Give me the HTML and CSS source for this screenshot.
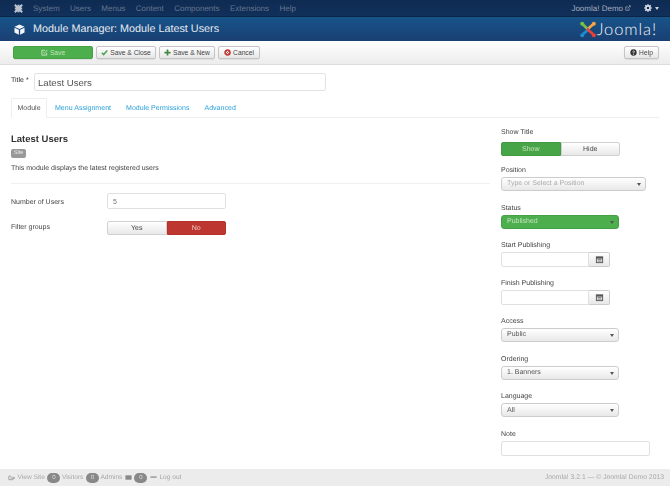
FILE: index.html
```html
<!DOCTYPE html>
<html lang="en">
<head>
    <meta charset="UTF-8">
    <title>Module Manager: Module Latest Users</title>
    <link rel="stylesheet" href="styles.css">
</head>
<body>
    <nav class="topnav">
        <svg class="brand-icon" viewBox="0 0 12 12"><path d="M2 2 L10 10 M10 2 L2 10 M2 6 H4 M10 6 H8 M6 2 V4 M6 10 V8" stroke="#bcc3ce" stroke-width="2.2" fill="none"/></svg>
        <ul class="menu">
            <li>System</li>
            <li>Users</li>
            <li>Menus</li>
            <li>Content</li>
            <li>Components</li>
            <li>Extensions</li>
            <li>Help</li>
        </ul>
        <div class="nav-right">
            <span>Joomla! Demo</span>
            <svg class="ext-icon" viewBox="0 0 8 8"><path d="M5.5 4.5 V7 H1 V2.5 H3.5 M3.5 4.5 L7 1 M5 1 H7 V3" stroke="#9aa7ba" fill="none"/></svg>
            <svg class="gear" viewBox="0 0 10 10"><circle cx="5" cy="5" r="2.6" fill="none" stroke="#dfe3ea" stroke-width="2"/><path d="M5 0 V10 M0 5 H10 M1.5 1.5 L8.5 8.5 M8.5 1.5 L1.5 8.5" stroke="#dfe3ea" stroke-width="1.3" stroke-dasharray="1.6 6.8"/></svg>
            <span class="caret caret-light"></span>
        </div>
    </nav>

    <header class="subhead">
        <svg class="cube" viewBox="0 0 12 12"><path d="M6 0.5 L11.5 3 L6 5.4 L0.5 3 Z M0.5 4.2 L5.3 6.4 V11.8 L0.5 9.4 Z M11.5 4.2 L6.7 6.4 V11.8 L11.5 9.4 Z" fill="#f2f4f7"/></svg>
        <h1>Module Manager: Module Latest Users</h1>
        <div class="logo">
            <svg class="logo-mark" viewBox="0 0 16 17">
                <path d="M3 3.5 L6 6.5 L9 9.5" stroke="#7ac143" stroke-width="2.6" fill="none"/>
                <circle cx="2.2" cy="2.8" r="2" fill="#7ac143"/>
                <path d="M13 3.5 L10 6 L7 9" stroke="#f9a541" stroke-width="2.6" fill="none"/>
                <circle cx="13.8" cy="2.8" r="2" fill="#f9a541"/>
                <path d="M3 13 L5.5 11 L9 7.5" stroke="#1c8fd0" stroke-width="2.6" fill="none"/>
                <circle cx="2.2" cy="14.2" r="2" fill="#1c8fd0"/>
                <path d="M13 13 L10 10.5 L7 8" stroke="#ee4035" stroke-width="2.6" fill="none"/>
                <circle cx="13.8" cy="14.2" r="2" fill="#ee4035"/>
            </svg>
            <span class="logo-text">Joomla!</span>
        </div>
    </header>

    <div class="toolbar">
        <button class="btn btn-green btn-save">
            <svg class="icon" viewBox="0 0 8 8"><path d="M6.5 4.5 V7 H1 V1.5 H4.5 M2.8 3.8 L4 5 L7.2 1.2" stroke="#cfe8c8" stroke-width="1" fill="none"/></svg>
            Save
        </button>
        <button class="btn btn-close">
            <svg class="icon" viewBox="0 0 8 8"><path d="M1 4.2 L3 6.4 L7.2 1.6" stroke="#51a351" stroke-width="1.8" fill="none"/></svg>
            Save &amp; Close
        </button>
        <button class="btn btn-new">
            <svg class="icon" viewBox="0 0 8 8"><path d="M4 0.5 V7.5 M0.5 4 H7.5" stroke="#468847" stroke-width="2" fill="none"/></svg>
            Save &amp; New
        </button>
        <button class="btn btn-cancel">
            <svg class="icon" viewBox="0 0 8 8"><circle cx="4" cy="4" r="2.8" fill="none" stroke="#bd362f" stroke-width="1.8"/><path d="M2.5 2.5 L5.5 5.5 M5.5 2.5 L2.5 5.5" stroke="#bd362f" stroke-width="1"/></svg>
            Cancel
        </button>
        <button class="btn btn-help">
            <svg class="icon" viewBox="0 0 8 8"><circle cx="4" cy="4" r="3.6" fill="#333"/><path d="M2.8 3.2 Q4 1.6 5.2 3 Q5 4 4 4.4 V5 M4 5.6 V6.6" stroke="#fff" stroke-width="0.9" fill="none"/></svg>
            Help
        </button>
    </div>

    <form class="content">
        <div class="title-row">
            <label class="title-label">Title *</label>
            <input class="title-input" type="text" value="Latest Users">
        </div>

        <ul class="tabs">
            <li class="tab active">Module</li>
            <li class="tab">Menu Assignment</li>
            <li class="tab">Module Permissions</li>
            <li class="tab">Advanced</li>
        </ul>

        <div class="columns">
            <section class="main">
                <h2>Latest Users</h2>
                <span class="badge">Site</span>
                <p class="desc">This module displays the latest registered users</p>
                <hr>
                <div class="field-row">
                    <label>Number of Users</label>
                    <input class="text-input w-119" type="text" value="5">
                </div>
                <div class="field-row">
                    <label>Filter groups</label>
                    <div class="toggle toggle-low">
                        <span class="toggle-btn">Yes</span>
                        <span class="toggle-btn on-red">No</span>
                    </div>
                </div>
            </section>

            <aside class="side">
                <div class="group">
                    <label>Show Title</label>
                    <div class="toggle toggle-show">
                        <span class="toggle-btn on-green">Show</span>
                        <span class="toggle-btn">Hide</span>
                    </div>
                </div>
                <div class="group">
                    <label>Position</label>
                    <div class="select wide muted">Type or Select a Position<span class="caret"></span></div>
                </div>
                <div class="group">
                    <label>Status</label>
                    <div class="select select-green">Published<span class="caret"></span></div>
                </div>
                <div class="group">
                    <label>Start Publishing</label>
                    <div class="date">
                        <input class="text-input date-input" type="text">
                        <span class="date-btn">
                            <svg class="cal" viewBox="0 0 10 10"><path d="M1 1.5 H9 V9 H1 Z" fill="#555"/><path d="M2 4 H8 V8 H2 Z" fill="#ddd"/><path d="M3 5 H7 M3 6.8 H7" stroke="#555" stroke-width="0.7"/></svg>
                        </span>
                    </div>
                </div>
                <div class="group">
                    <label>Finish Publishing</label>
                    <div class="date">
                        <input class="text-input date-input" type="text">
                        <span class="date-btn">
                            <svg class="cal" viewBox="0 0 10 10"><path d="M1 1.5 H9 V9 H1 Z" fill="#555"/><path d="M2 4 H8 V8 H2 Z" fill="#ddd"/><path d="M3 5 H7 M3 6.8 H7" stroke="#555" stroke-width="0.7"/></svg>
                        </span>
                    </div>
                </div>
                <div class="group">
                    <label>Access</label>
                    <div class="select">Public<span class="caret"></span></div>
                </div>
                <div class="group">
                    <label>Ordering</label>
                    <div class="select">1. Banners<span class="caret"></span></div>
                </div>
                <div class="group">
                    <label>Language</label>
                    <div class="select">All<span class="caret"></span></div>
                </div>
                <div class="group">
                    <label>Note</label>
                    <input class="text-input note-input" type="text">
                </div>
            </aside>
        </div>
    </form>

    <footer class="status">
        <svg class="foot-icon" viewBox="0 0 8 8"><path d="M5.5 4.5 V6.5 H1 V2.5 H3.5 M3 4.5 H7.5 M6 3 L7.5 4.5 L6 6" stroke="#999" fill="none"/></svg>
        <span>View Site</span>
        <b class="pill">0</b><span>Visitors</span>
        <b class="pill">0</b><span>Admins</span>
        <svg class="foot-icon" viewBox="0 0 8 8"><path d="M0.5 1.5 H7.5 V6.5 H0.5 Z" fill="#888"/></svg>
        <b class="pill">0</b>
        <svg class="foot-icon" viewBox="0 0 8 8"><path d="M0.5 3.5 H7.5" stroke="#888" stroke-width="1.4"/></svg>
        <span>Log out</span>
        <span class="copy">Joomla! 3.2.1 — © Joomla! Demo 2013</span>
    </footer>
</body>
</html>
```

FILE: styles.css
```css
* {
    box-sizing: border-box;
}

body {
    margin: 0;
    background: #fff;
    color: #333;
    font-family: "Liberation Sans", Arial, sans-serif;
    font-size: 8px;
    text-rendering: geometricPrecision;
    height: 502px;
    overflow: hidden;
    filter: blur(0.4px);
}

/* top bar */
.topnav {
    display: flex;
    align-items: center;
    height: 17px;
    padding: 0 11px 0 13px;
    background: linear-gradient(#0e2b52, #11305a);
    color: #65758f;
    border-bottom: 1px solid #0c2544;
}

.brand-icon {
    width: 11px;
    height: 11px;
}

.menu {
    display: flex;
    gap: 10.4px;
    list-style: none;
    margin: 0 0 0 9px;
    padding: 0;
}

.nav-right {
    display: flex;
    align-items: center;
    margin-left: auto;
    color: #a3aebf;
}

.ext-icon {
    width: 6px;
    height: 6px;
    margin-left: 2px;
}

.gear {
    width: 8px;
    height: 8px;
    margin-left: 13px;
}

.caret {
    width: 0;
    height: 0;
    margin-left: auto;
    border-left: 2.5px solid transparent;
    border-right: 2.5px solid transparent;
    border-top: 3px solid #555;
}

.nav-right .caret-light {
    margin-left: 3px;
    border-top-color: #cfd5df;
}

/* blue title band */
.subhead {
    display: flex;
    align-items: center;
    height: 24px;
    padding: 0 13px 0 14px;
    background: linear-gradient(#17548a, #1a3f73);
    color: #e6ebf2;
}

.cube {
    width: 11px;
    height: 11px;
}

.subhead h1 {
    margin: 0 0 0 8px;
    font-size: 10.8px;
    font-weight: normal;
}

.logo {
    display: flex;
    align-items: center;
    margin-left: auto;
}

.logo-mark {
    width: 16px;
    height: 17px;
}

.logo-text {
    margin-left: 1px;
    font-family: Lato, sans-serif;
    font-weight: 300;
    font-size: 16.5px;
    letter-spacing: 0.9px;
    color: #f2f4f7;
}

/* toolbar */
.toolbar {
    display: flex;
    align-items: center;
    gap: 3px;
    height: 24px;
    padding: 0 11px 0 13px;
    background: linear-gradient(#fff, #ececec);
    border-bottom: 1px solid #dcdcdc;
}

.btn {
    display: flex;
    align-items: center;
    justify-content: center;
    gap: 2px;
    height: 13px;
    padding: 0;
    font: inherit;
    font-size: 6.7px;
    color: #444;
    background: linear-gradient(#fff, #e6e6e6);
    border: 1px solid #c5c5c5;
    border-radius: 2px;
    box-shadow: 0 1px 1px rgba(0, 0, 0, 0.08);
}

.btn-save {
    width: 80px;
}

.btn-close {
    width: 60px;
}

.btn-new {
    width: 56px;
}

.btn-cancel {
    width: 42px;
}

.btn-green {
    background: #4cae4c;
    border-color: #46a046;
    color: #c4e3bf;
}

.btn-help {
    margin-left: auto;
    width: 35px;
}

.icon {
    width: 7px;
    height: 7px;
}

/* form */
.content {
    padding: 8px 11px 0;
}

.title-row {
    display: flex;
    align-items: center;
    height: 18px;
}

.title-label {
    width: 23px;
    font-size: 7px;
    margin-top: -3px;
}

.title-input {
    width: 292px;
    height: 18px;
    padding: 0 3px;
    font: inherit;
    font-size: 9.6px;
    color: #555;
    border: 1px solid #e2e2e2;
    border-radius: 2px;
}

.tabs {
    display: flex;
    height: 20px;
    list-style: none;
    margin: 7px 0 0;
    padding: 0;
    border-bottom: 1px solid #eee;
    color: #2aa0d8;
    font-size: 7.05px;
}

.tab {
    padding: 6.5px 7.5px 0;
    white-space: nowrap;
}

.tab.active {
    width: 36px;
    height: 20px;
    margin-right: 0.5px;
    padding: 5.5px 0 0;
    text-align: center;
    color: #555;
    background: #fff;
    border: 1px solid #eee;
    border-bottom-color: #fff;
    border-radius: 2px 2px 0 0;
}

.columns {
    display: flex;
}

.main {
    flex: none;
    width: 490px;
    padding-top: 16px;
}

.main h2 {
    margin: 0;
    font-size: 9.5px;
    line-height: 12px;
    color: #333;
}

.badge {
    display: block;
    width: 15px;
    height: 9px;
    margin-top: 3px;
    font-size: 5.5px;
    line-height: 9px;
    text-align: center;
    color: #eee;
    background: #999;
    border-radius: 2px;
}

.desc {
    margin: 6px 0 0;
    font-size: 7px;
    line-height: 10px;
    color: #444;
}

.main hr {
    height: 1px;
    margin: 9px 11px 0 0;
    border: 0;
    background: #f0f0f0;
}

.field-row {
    display: flex;
    align-items: center;
    margin-top: 9px;
    height: 16px;
}

.field-row label {
    width: 96px;
    padding-top: 2px;
    font-size: 7px;
    color: #444;
}

.text-input {
    height: 15px;
    padding: 0 5px;
    font: inherit;
    font-size: 7px;
    color: #777;
    background: #fff;
    border: 1px solid #e0e0e0;
    border-radius: 2px;
}

.w-119 {
    width: 119px;
    height: 16px;
}

.toggle {
    display: flex;
    width: 119px;
    height: 14px;
}

.toggle-low {
    margin-top: 3px;
}

.toggle-show {
    margin-top: 3.5px;
}

.toggle-btn {
    flex: 1;
    font-size: 7px;
    line-height: 13px;
    text-align: center;
    color: #444;
    background: linear-gradient(#fff, #e8e8e8);
    border: 1px solid #d0d0d0;
}

.toggle-btn:first-child {
    border-radius: 2px 0 0 2px;
}

.toggle-btn:last-child {
    border-radius: 0 2px 2px 0;
}

.on-red {
    color: #eec9c6;
    background: #bd362f;
    border-color: #b3322b;
}

.on-green {
    color: #c4e3bf;
    background: #47a447;
    border-color: #429a42;
}

.side {
    flex: none;
    width: 149px;
    padding-top: 10px;
}

.group {
    height: 37.75px;
}

.group label {
    display: block;
    height: 10px;
    margin-bottom: 1px;
    font-size: 7px;
    line-height: 10px;
    color: #444;
}

.select {
    display: flex;
    align-items: center;
    width: 118px;
    height: 14px;
    padding: 1px 4px 0 5px;
    font-size: 7px;
    line-height: 12px;
    color: #555;
    background: linear-gradient(#fff, #e8e8e8);
    border: 1px solid #ccc;
    border-radius: 3px;
}

.select.wide {
    width: 145px;
}

.select.muted {
    color: #aaa;
}

.select-green {
    color: #c4e3bf;
    background: #4cae4c;
    border-color: #46a046;
}

.date {
    display: flex;
}

.date-input {
    width: 88px;
    border-radius: 2px 0 0 2px;
}

.date-btn {
    display: flex;
    align-items: center;
    justify-content: center;
    width: 21px;
    height: 15px;
    background: linear-gradient(#fff, #e8e8e8);
    border: 1px solid #ccc;
    border-left: 0;
    border-radius: 0 2px 2px 0;
}

.cal {
    width: 9px;
    height: 9px;
}

.note-input {
    width: 149px;
}

/* footer */
.status {
    position: absolute;
    left: 0;
    right: 0;
    top: 469px;
    display: flex;
    align-items: center;
    gap: 2.5px;
    height: 17px;
    padding: 0 6px 0 8px;
    background: #ececec;
    color: #a8a8a8;
    font-size: 6.6px;
}

.foot-icon {
    width: 7px;
    height: 7px;
}

.pill {
    width: 13px;
    height: 10px;
    font-size: 6px;
    line-height: 10px;
    font-weight: normal;
    text-align: center;
    color: #ddd;
    background: #888;
    border-radius: 6px;
}

.pill + span {
    margin-left: -1px;
}

.copy {
    margin-left: auto;
    font-size: 6.8px;
}
```
